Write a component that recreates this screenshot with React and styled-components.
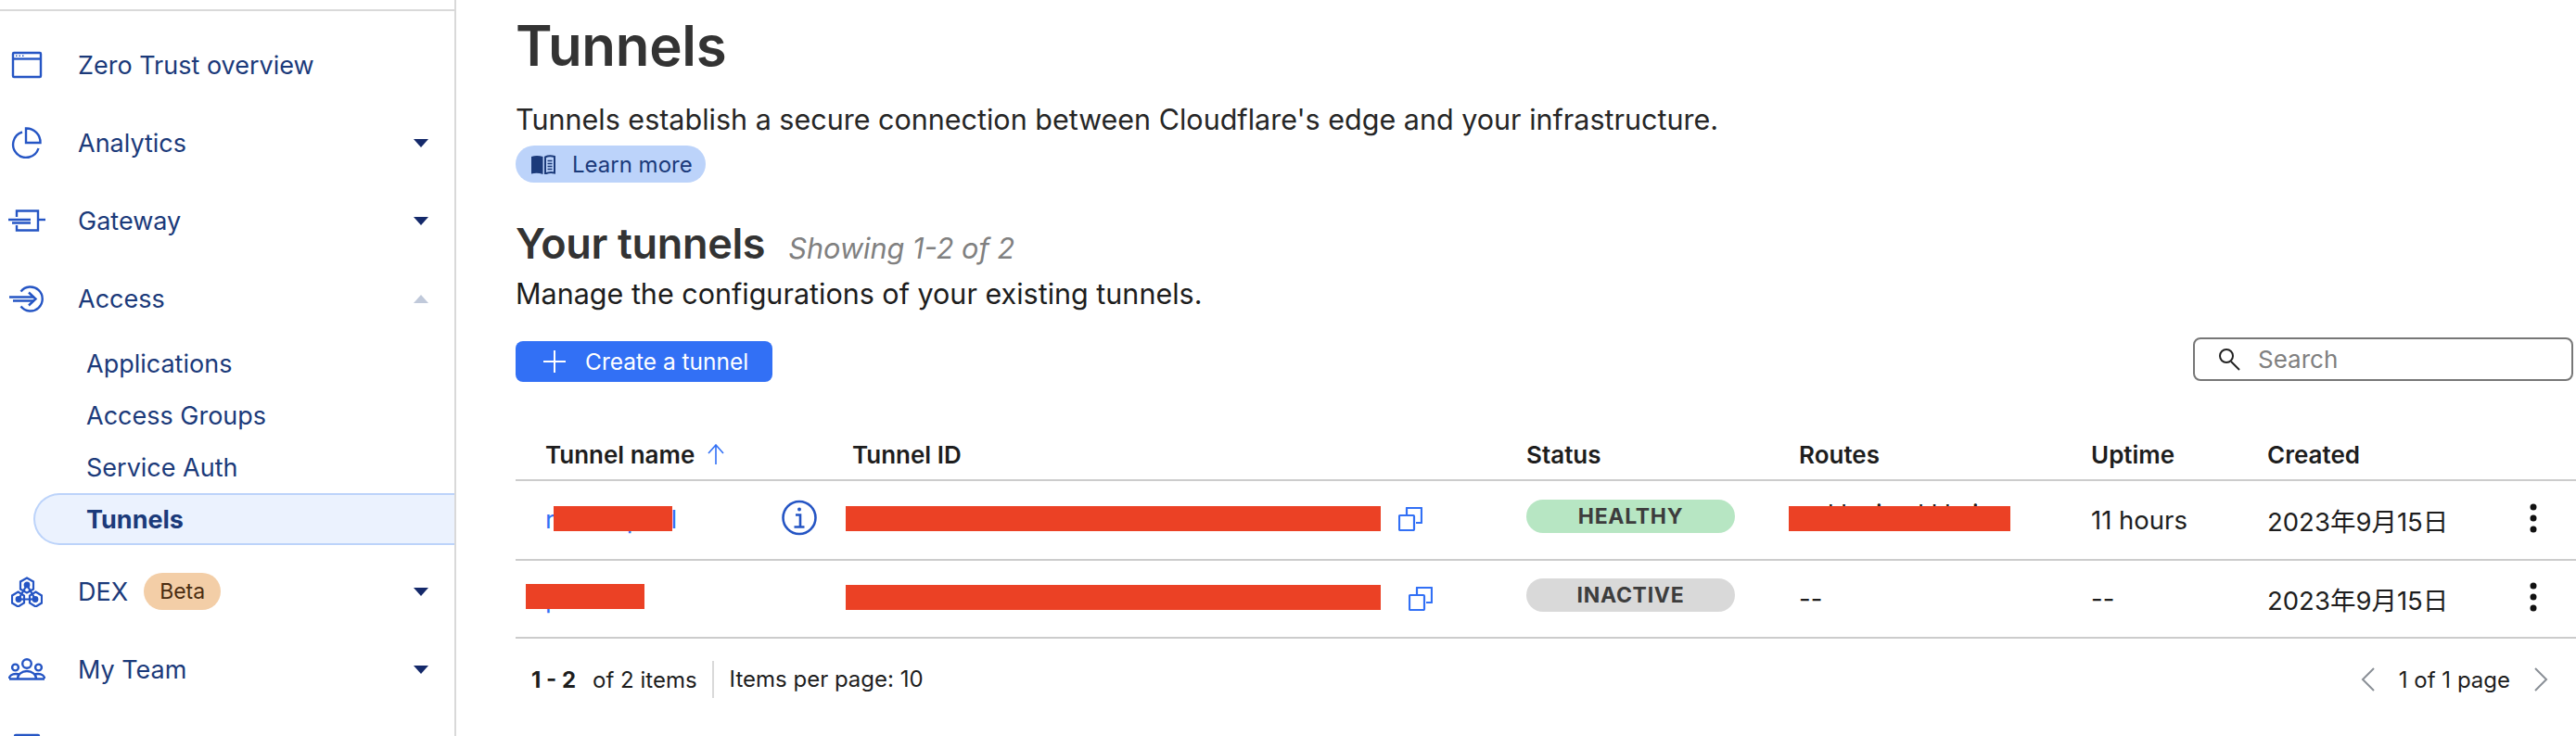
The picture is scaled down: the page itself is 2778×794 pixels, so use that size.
import React from 'react';
import styled, { createGlobalStyle } from 'styled-components';

const GlobalStyle = createGlobalStyle`
  html, body { margin: 0; padding: 0; background: #fff; height: 100%; overflow: hidden; }
  body { font-family: Inter, "Noto Sans CJK SC", sans-serif; }
`;

const Page = styled.div`
  display: flex;
  width: 2778px;
  height: 794px;
  overflow: hidden;
`;

const Sidebar = styled.aside`
  flex: 0 0 492px;
  box-sizing: border-box;
  height: 794px;
  overflow: hidden;
  padding-top: 28px;
  border-right: 2px solid #d9d9d9;
  position: relative;
  color: #1b3a7a;
  &::before {
    content: '';
    position: absolute;
    top: 10px;
    left: 0;
    right: 0;
    height: 2px;
    background: #d9d9d9;
  }
`;

const NavRow = styled.div`
  display: grid;
  grid-template-columns: 84px 1fr 44px;
  align-items: center;
  height: 84px;
  font-size: 27px;
  &.dex { margin-top: 8px; }
`;

const NavIcon = styled.span`
  display: flex;
  justify-content: center;
  width: 58px;
  svg { display: block; }
`;

const NavLabel = styled.span`
  display: flex;
  align-items: center;
  gap: 17px;
`;

const Caret = styled.span`
  width: 0;
  height: 0;
  border-left: 8px solid transparent;
  border-right: 8px solid transparent;
  border-top: ${(p) => (p.$up ? 'none' : '9px solid #14296a')};
  border-bottom: ${(p) => (p.$up ? '9px solid #c0c9da' : 'none')};
`;

const BetaTag = styled.span`
  display: inline-flex;
  align-items: center;
  height: 40px;
  padding: 0 17px;
  border-radius: 20px;
  background: #f3cea7;
  color: #4a2c10;
  font-size: 23px;
`;

const SubList = styled.div`
  display: flex;
  flex-direction: column;
`;

const SubRow = styled.div`
  box-sizing: border-box;
  height: 56px;
  display: flex;
  align-items: center;
  font-size: 27px;
  padding-left: 93px;
  ${(p) =>
    p.$active &&
    `
    margin-left: 36px;
    padding-left: 55px;
    font-weight: 700;
    background: #ebf2fe;
    border: 2px solid #bcd3fa;
    border-right: none;
    border-radius: 28px 0 0 28px;
  `}
`;

const Main = styled.main`
  flex: 1;
  min-width: 0;
  padding: 0 0 0 64px;
  color: #1d1d1d;
`;

const Title = styled.h1`
  margin: 13px 0 0;
  height: 72px;
  line-height: 72px;
  font-size: 60px;
  font-weight: 600;
  color: #333;
  letter-spacing: -0.3px;
`;

const Description = styled.p`
  margin: 24px 0 0;
  height: 40px;
  line-height: 40px;
  font-size: 30.5px;
  color: #262626;
`;

const LearnMore = styled.a`
  display: flex;
  width: fit-content;
  align-items: center;
  gap: 17px;
  box-sizing: border-box;
  height: 40px;
  margin-top: 8px;
  padding: 0 14px 0 17px;
  border-radius: 20px;
  background: #bcd3fa;
  color: #1b3a7a;
  font-size: 24px;
`;

const SectionHead = styled.div`
  display: flex;
  align-items: baseline;
  gap: 25px;
  margin-top: 38px;
  height: 56px;
`;

const SectionTitle = styled.h2`
  margin: 0;
  font-size: 45px;
  font-weight: 600;
  letter-spacing: -0.35px;
  line-height: 56px;
  color: #333;
`;

const Showing = styled.span`
  font-size: 30.7px;
  font-style: italic;
  color: #808080;
`;

const Manage = styled.p`
  margin: 8px 0 0;
  height: 36px;
  line-height: 36px;
  font-size: 30.5px;
`;

const Toolbar = styled.div`
  display: flex;
  justify-content: space-between;
  align-items: flex-start;
  margin-top: 29px;
  height: 55px;
  padding-right: 3px;
`;

const CreateButton = styled.button`
  display: flex;
  align-items: center;
  gap: 21px;
  box-sizing: border-box;
  width: 277px;
  height: 44px;
  margin-top: 4px;
  padding: 0 0 0 30px;
  border: none;
  border-radius: 8px;
  background: #3270f5;
  color: #fff;
  font: inherit;
  font-size: 24.5px;
`;

const SearchBox = styled.div`
  display: flex;
  align-items: center;
  gap: 19px;
  box-sizing: border-box;
  width: 410px;
  height: 47px;
  padding-left: 25px;
  border: 2px solid #777;
  border-radius: 8px;
  color: #808080;
  font-size: 26px;
`;

const columns = '363px 727px 294px 315px 190px 260px 1fr';

const HeaderRow = styled.div`
  display: grid;
  grid-template-columns: ${columns};
  align-items: center;
  height: 54px;
  margin-top: 44px;
  border-bottom: 2px solid #ccc;
  font-size: 26px;
  font-weight: 600;
`;

const HeadCell = styled.div`
  display: flex;
  align-items: center;
  gap: 13px;
  padding-left: ${(p) => p.$pad || 0}px;
`;

const Row = styled.div`
  display: grid;
  grid-template-columns: ${columns};
  align-items: center;
  box-sizing: border-box;
  height: ${(p) => p.$h}px;
  border-bottom: 2px solid #ccc;
  font-size: 27.5px;
`;

const NameCell = styled.div`
  position: relative;
  padding-left: 32px;
  height: 40px;
  display: flex;
  align-items: center;
`;

const NameLink = styled.a`
  color: #3270f5;
  white-space: pre;
  margin-top: ${(p) => p.$shift || 0}px;
`;

const Redaction = styled.div`
  position: absolute;
  top: ${(p) => p.$top}px;
  left: ${(p) => p.$left}px;
  width: ${(p) => p.$w}px;
  height: 27px;
  background: #eb4125;
`;

const InfoWrap = styled.span`
  position: absolute;
  left: 287px;
  top: -2px;
  display: flex;
`;

const IdCell = styled.div`
  position: relative;
  height: 40px;
`;

const CopyWrap = styled.span`
  position: absolute;
  left: ${(p) => p.$left}px;
  top: ${(p) => p.$top}px;
  display: flex;
`;

const StatusPill = styled.span`
  display: flex;
  align-items: center;
  justify-content: center;
  width: 225px;
  height: 36px;
  margin-top: -8px;
  border-radius: 18px;
  background: ${(p) => (p.$healthy ? '#b7e6c3' : '#d9d9d9')};
  color: #3d3d3d;
  font-size: 23px;
  font-weight: 700;
  letter-spacing: 0.7px;
`;

const RouteCell = styled.div`
  position: relative;
  height: 40px;
  display: flex;
  align-items: center;
`;

const RouteText = styled.span`
  white-space: pre;
  margin-top: -14px;
`;

const Kebab = styled.div`
  display: flex;
  justify-content: flex-end;
  padding-right: 42px;
  margin-top: -4px;
`;

const Footer = styled.div`
  display: flex;
  align-items: center;
  justify-content: space-between;
  height: 40px;
  margin-top: 24px;
  font-size: 24px;
`;

const Counts = styled.div`
  display: flex;
  align-items: center;
  height: 40px;
  padding-left: 17px;
`;

const Strong = styled.b`
  font-weight: 700;
  margin-right: 18px;
`;

const PerPage = styled.span`
  margin-left: 16px;
  padding-left: 17px;
  height: 40px;
  line-height: 40px;
  border-left: 2px solid #d9d9d9;
`;

const Pager = styled.div`
  display: flex;
  align-items: center;
  gap: 25px;
  padding-right: 30px;
`;

const iconStroke = '#2555c4';

const IconWindow = () => (
  <svg width="34" height="30" viewBox="0 0 34 30" fill="none" stroke={iconStroke} strokeWidth="2.400">
    <rect x="2" y="2" width="30" height="26" rx="1" />
    <path d="M2 8.500h30" />
    <path d="M5 5.200h1.500M8.500 5.200h1.500M12 5.200h1.500" strokeWidth="1.600" />
  </svg>
);

const IconPie = () => (
  <svg width="34" height="34" viewBox="0 0 34 34" fill="none" stroke={iconStroke} strokeWidth="2.400">
    <path d="M12 5.500a14 14 0 1 0 17.500 17.500" />
    <path d="M16 1.500a15 15 0 0 1 15.500 15.500H16z" />
  </svg>
);

const IconGateway = () => (
  <svg width="40" height="24" viewBox="0 0 40 24" fill="none" stroke={iconStroke} strokeWidth="2.400">
    <path d="M9 8V1.500h23v21H9V17" />
    <path d="M32 11h8" />
    <path d="M0 11h24M4 14.500h20" />
  </svg>
);

const IconAccess = () => (
  <svg width="38" height="29" viewBox="0 0 38 29" fill="none" stroke={iconStroke} strokeWidth="2.400">
    <path d="M12.500 6.500a13 13 0 1 1 0 16" />
    <path d="M0 12.500h27M4 16.500h23" />
    <path d="M21 7.500l7.500 7-7.500 7" />
  </svg>
);

const IconDex = () => (
  <svg width="34" height="33" viewBox="0 0 34 33" fill="none" stroke={iconStroke} strokeWidth="2.200">
    <path d="M17 1.500l7 4v8l-7 4-7-4v-8z" />
    <path d="M7.500 16.500l6.500 4v8l-6.500 4-6.500-4v-8z" />
    <path d="M26.500 16.500l6.500 4v8l-6.500 4-6.500-4v-8z" />
    <path d="M17 9L8 24.500h18zM8 24.500h18" />
    <circle cx="17" cy="9" r="2.300" fill={iconStroke} />
    <circle cx="8" cy="24.500" r="2.300" fill={iconStroke} />
    <circle cx="26" cy="24.500" r="2.300" fill={iconStroke} />
  </svg>
);

const IconTeam = () => (
  <svg width="40" height="24" viewBox="0 0 40 24" fill="none" stroke={iconStroke} strokeWidth="2.400">
    <circle cx="20" cy="6" r="4.800" />
    <circle cx="7.500" cy="10" r="3.400" />
    <circle cx="32.500" cy="10" r="3.400" />
    <path d="M1 22c0-3 3-5 7-5 1.500 0 3 .3 4 1M39 22c0-3-3-5-7-5-1.500 0-3 .3-4 1M10 22a10 8 0 0 1 20 0M1 22.500h38" />
  </svg>
);

const IconPartial = () => (
  <svg width="30" height="30" viewBox="0 0 30 30" fill="none" stroke={iconStroke} strokeWidth="2.400">
    <rect x="2" y="2" width="26" height="26" rx="1" />
  </svg>
);

const IconBook = () => (
  <svg width="27" height="21" viewBox="0 0 27 21" fill="#1b3a7a">
    <path d="M0 2c4-1.500 8-1.500 12.500 0v19C8.500 19.500 4 19.500 0 20.500z" />
    <path d="M15 2.500c3-1.500 6.500-1.500 10 -.5v17.500c-3.500-.8-7-.5-10 1z" fill="none" stroke="#1b3a7a" strokeWidth="2" />
    <path d="M17.500 6.500h5M17.500 9.500h5M17.500 12.500h5M17.500 15.500h5" stroke="#1b3a7a" strokeWidth="1.400" />
  </svg>
);

const IconPlus = () => (
  <svg width="24" height="24" viewBox="0 0 24 24" stroke="#fff" strokeWidth="2">
    <path d="M12 0v24M0 12h24" />
  </svg>
);

const IconSearch = () => (
  <svg width="24" height="24" viewBox="0 0 24 24" fill="none" stroke="#222" strokeWidth="2">
    <circle cx="9" cy="8" r="7" />
    <path d="M14 14l9 9" />
  </svg>
);

const IconArrowUp = () => (
  <svg width="20" height="22" viewBox="0 0 20 22" fill="none" stroke="#3270f5" strokeWidth="1.600">
    <path d="M10 22V1M2 10l8-9 8 9" />
  </svg>
);

const IconInfo = () => (
  <svg width="38" height="39" viewBox="0 0 38 39" fill="none" stroke={iconStroke} strokeWidth="2.600">
    <circle cx="19" cy="19.500" r="17.500" />
    <circle cx="19" cy="10.500" r="2" fill={iconStroke} stroke="none" />
    <path d="M15 16.500h5v13M13.500 29.500h11" />
  </svg>
);

const IconCopy = () => (
  <svg width="26" height="26" viewBox="0 0 26 26" fill="none" stroke="#3270f5" strokeWidth="2.200" strokeLinejoin="round">
    <rect x="1" y="9" width="16" height="16" rx="1" />
    <path d="M9 8V1h16v16h-6" />
  </svg>
);

const IconKebab = () => (
  <svg width="8" height="32" viewBox="0 0 8 32" fill="#111">
    <circle cx="4" cy="4" r="3.500" />
    <circle cx="4" cy="16" r="3.500" />
    <circle cx="4" cy="28" r="3.500" />
  </svg>
);

const IconChevron = ({ flip }) => (
  <svg width="16" height="26" viewBox="0 0 16 26" fill="none" stroke="#8a8f96" strokeWidth="2" style={flip ? { transform: 'scaleX(-1)' } : undefined}>
    <path d="M14 1L2 13l12 12" />
  </svg>
);

const navTop = [
  { label: 'Zero Trust overview', icon: <IconWindow /> },
  { label: 'Analytics', icon: <IconPie />, caret: true },
  { label: 'Gateway', icon: <IconGateway />, caret: true },
  { label: 'Access', icon: <IconAccess />, caret: true, up: true },
];

const subItems = ['Applications', 'Access Groups', 'Service Auth', 'Tunnels'];

const App = () => (
  <>
    <GlobalStyle />
    <Page>
      <Sidebar>
        {navTop.map((item) => (
          <NavRow key={item.label}>
            <NavIcon>{item.icon}</NavIcon>
            <NavLabel>{item.label}</NavLabel>
            {item.caret && <Caret $up={item.up} />}
          </NavRow>
        ))}
        <SubList>
          {subItems.map((s) => (
            <SubRow key={s} $active={s === 'Tunnels'}>{s}</SubRow>
          ))}
        </SubList>
        <NavRow className="dex">
          <NavIcon><IconDex /></NavIcon>
          <NavLabel>DEX <BetaTag>Beta</BetaTag></NavLabel>
          <Caret />
        </NavRow>
        <NavRow>
          <NavIcon><IconTeam /></NavIcon>
          <NavLabel>My Team</NavLabel>
          <Caret />
        </NavRow>
        <NavRow>
          <NavIcon><IconPartial /></NavIcon>
        </NavRow>
      </Sidebar>
      <Main>
        <Title>Tunnels</Title>
        <Description>Tunnels establish a secure connection between Cloudflare's edge and your infrastructure.</Description>
        <LearnMore><IconBook /> Learn more</LearnMore>
        <SectionHead>
          <SectionTitle>Your tunnels</SectionTitle>
          <Showing>Showing 1-2 of 2</Showing>
        </SectionHead>
        <Manage>Manage the configurations of your existing tunnels.</Manage>
        <Toolbar>
          <CreateButton><IconPlus /> Create a tunnel</CreateButton>
          <SearchBox><IconSearch /> Search</SearchBox>
        </Toolbar>
        <HeaderRow>
          <HeadCell $pad={32}>Tunnel name <IconArrowUp /></HeadCell>
          <HeadCell>Tunnel ID</HeadCell>
          <HeadCell>Status</HeadCell>
          <HeadCell>Routes</HeadCell>
          <HeadCell>Uptime</HeadCell>
          <HeadCell>Created</HeadCell>
        </HeaderRow>
        <Row $h={86}>
          <NameCell>
            {/* only the letters that stick out from under the redaction */}
            <NameLink $shift={-2}>{'r          p    l'}</NameLink>
            <Redaction $left={41} $w={128} $top={5} />
            <InfoWrap><IconInfo /></InfoWrap>
          </NameCell>
          <IdCell>
            <Redaction $left={-7} $w={577} $top={5} />
            <CopyWrap $left={589} $top={6}><IconCopy /></CopyWrap>
          </IdCell>
          <StatusPill $healthy>HEALTHY</StatusPill>
          <RouteCell>
            <RouteText>{'    l l    i     l l l   i'}</RouteText>
            <Redaction $left={-11} $w={239} $top={5} />
          </RouteCell>
          <div>11 hours</div>
          <div>2023年9月15日</div>
          <Kebab><IconKebab /></Kebab>
        </Row>
        <Row $h={84}>
          <NameCell>
            <NameLink>p</NameLink>
            <Redaction $left={11} $w={128} $top={4} />
          </NameCell>
          <IdCell>
            <Redaction $left={-7} $w={577} $top={5} />
            <CopyWrap $left={600} $top={7}><IconCopy /></CopyWrap>
          </IdCell>
          <StatusPill>INACTIVE</StatusPill>
          <div>--</div>
          <div>--</div>
          <div>2023年9月15日</div>
          <Kebab><IconKebab /></Kebab>
        </Row>
        <Footer>
          <Counts>
            <Strong>1 - 2</Strong> of 2 items
            <PerPage>Items per page: 10</PerPage>
          </Counts>
          <Pager>
            <IconChevron />
            <span>1 of 1 page</span>
            <IconChevron flip />
          </Pager>
        </Footer>
      </Main>
    </Page>
  </>
);

export default App;
